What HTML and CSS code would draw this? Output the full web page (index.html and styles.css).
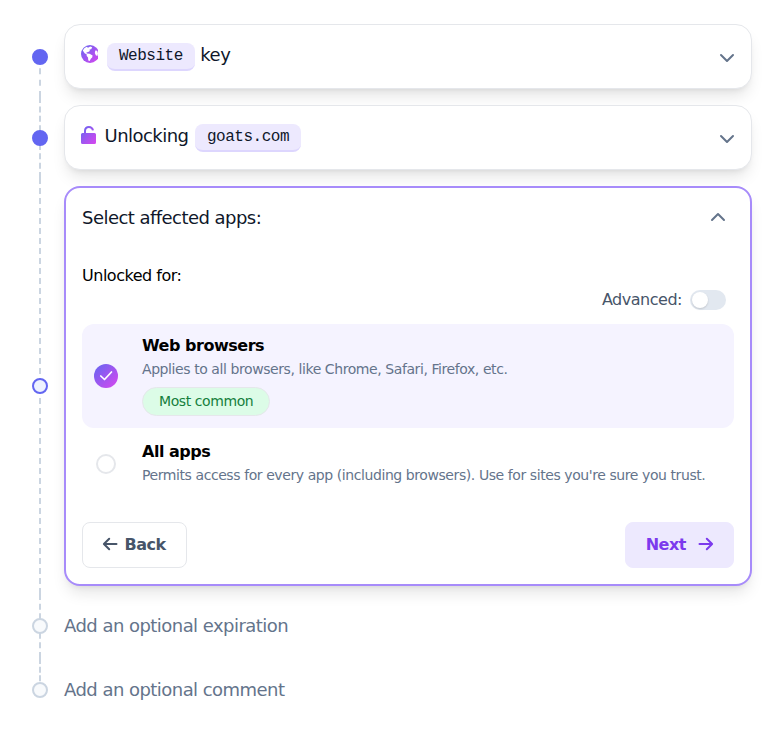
FILE: index.html
```html
<!DOCTYPE html>
<html lang="en">
<head>
<meta charset="utf-8">
<title>Add website key</title>
<link rel="stylesheet" href="styles.css">
</head>
<body>
<svg class="defs" width="0" height="0" aria-hidden="true">
  <linearGradient id="brand" x1="0" y1="0" x2="1" y2="1"><stop offset="0" stop-color="#6366f1"/><stop offset="1" stop-color="#d946ef"/></linearGradient>
</svg>
<main class="steps">
  <section class="step done">
    <div class="rail"><span class="dot"></span></div>
    <div class="card summary">
      <h2 class="title">
        <svg class="globe" width="17" height="18" viewBox="0 0 17 18"><circle cx="9" cy="9" r="9" fill="url(#brand)"/><path fill="#fff" d="M1.800 5.600 3.300 3.200 5.700 1.800 7 2.800 9.200 1.600 11.200 2.300 10.200 4.200 8.600 4.500 8.800 5.900 7.200 7.100 5.400 7.400 5.800 8.600 8.600 8.800 11.600 10.400 11.200 12.500 9.800 13.800 8.700 16 7.300 15.400 7 12.600 5.600 10.800 5.800 9.500 3.600 8.200ZM14.300 5.500 16.200 5.700 17 8.500 16.400 11 14.800 10.200 13.800 8Z"/></svg>
        <code class="chip">Website</code><span class="after">key</span>
      </h2>
      <svg class="chevron" width="24" height="24" viewBox="0 0 24 24"><path d="m6 9 6 6 6-6"/></svg>
    </div>
  </section>
  <section class="step done">
    <div class="rail"><span class="dot"></span></div>
    <div class="card summary">
      <h2 class="title">
        <svg class="lock" width="15" height="18" viewBox="0 0 15 18"><path fill="url(#brand)" d="M1.500 7H3V4.800C3 2 5 0 7.900 0c2.700 0 4.700 1.700 5.100 4.200l-2.100.4C10.700 3 9.500 2 7.900 2 6.200 2 5 3.200 5 4.900V7h8.500A1.500 1.500 0 0 1 15 8.500v8a1.500 1.500 0 0 1-1.500 1.500h-12A1.500 1.500 0 0 1 0 16.500v-8A1.500 1.500 0 0 1 1.500 7Z"/></svg>
        <span class="before">Unlocking</span><code class="chip">goats.com</code>
      </h2>
      <svg class="chevron" width="24" height="24" viewBox="0 0 24 24"><path d="m6 9 6 6 6-6"/></svg>
    </div>
  </section>
  <section class="step current">
    <div class="rail"><span class="dot"></span></div>
    <div class="card panel">
      <header class="panel-head">
        <h2 class="title">Select affected apps:</h2>
        <svg class="chevron" width="24" height="24" viewBox="0 0 24 24"><path d="m6 15 6-6 6 6"/></svg>
      </header>
      <p class="label">Unlocked for:</p>
      <div class="advanced"><span>Advanced:</span><span class="switch"><span class="knob"></span></span></div>
      <div class="option selected">
        <div class="mark"><svg width="24" height="24" viewBox="0 0 24 24"><circle cx="12" cy="12" r="12" fill="url(#brand)"/><path class="check" d="m6.800 12 3.700 3.500 7-7.500"/></svg></div>
        <div class="text">
          <h3>Web browsers</h3>
          <p>Applies to all browsers, like Chrome, Safari, Firefox, etc.</p>
          <span class="badge">Most common</span>
        </div>
      </div>
      <div class="option">
        <div class="mark"><span class="radio"></span></div>
        <div class="text">
          <h3>All apps</h3>
          <p>Permits access for every app (including browsers). Use for sites you're sure you trust.</p>
        </div>
      </div>
      <footer class="actions">
        <button class="btn back"><svg width="16" height="16" viewBox="0 0 16 16"><path d="M14.500 8H2M7.200 2.700 1.900 8l5.300 5.300"/></svg>Back</button>
        <button class="btn next">Next<svg width="16" height="16" viewBox="0 0 16 16"><path d="M1.500 8H14M8.800 2.700 14.100 8l-5.300 5.300"/></svg></button>
      </footer>
    </div>
  </section>
  <section class="step todo">
    <div class="rail"><span class="dot"></span></div>
    <h2 class="title">Add an optional expiration</h2>
  </section>
  <section class="step todo">
    <div class="rail"><span class="dot"></span></div>
    <h2 class="title">Add an optional comment</h2>
  </section>
</main>
</body>
</html>
```
FILE: styles.css
```css
* { box-sizing: border-box; margin: 0; padding: 0; }
body { background: #fff; color: #000; font: 16px/24px "DejaVu Sans", sans-serif; letter-spacing: -0.48px; }
svg { display: block; flex: none; }
.defs { position: absolute; }
.steps { padding: 16px; }
.step { display: grid; grid-template-columns: 48px 1fr; align-items: center; }
.todo { height: 64px; }
.rail { position: relative; align-self: stretch; display: flex; align-items: center; justify-content: center; }
.rail::before { content: ""; position: absolute; top: 0; bottom: 0; left: 23px; border-left: 2px dashed #cbd5e1; }
.step:first-child .rail::before { top: 50%; }
.step:last-child .rail::before { bottom: 50%; }
.dot { position: relative; width: 16px; height: 16px; border: 2px solid #cbd5e1; border-radius: 50%; background: #f8fafc; }
.done .dot { background: #6366f1; border-color: #6366f1; }
.current .dot { background: #eef2ff; border-color: #6366f1; }
.title { font-size: 18px; line-height: 28px; font-weight: 400; color: #0f172a; letter-spacing: -0.54px; }
.todo .title { color: #64748b; }
.card { margin: 8px 0; background: #fff; border: 1px solid #e5e7eb; border-radius: 16px; box-shadow: 0 10px 15px -3px rgba(0,0,0,.1), 0 4px 6px -4px rgba(0,0,0,.1); }
.summary { height: 65px; padding: 0 12px 0 16px; display: flex; align-items: center; justify-content: space-between; }
.summary .title { display: flex; align-items: center; padding-bottom: 4px; }
.summary .chevron { margin-top: 2px; }
.chip { display: block; height: 28px; margin-top: 4px; padding: 0 12px; border-bottom: 2px solid #ddd6fe; border-radius: 8px; background: #ede9fe; font: 16px/27px "Liberation Mono", monospace; letter-spacing: -0.48px; }
.globe { margin-right: 9px; margin-bottom: 2px; }
.lock { margin-right: 8.5px; margin-bottom: 2px; }
.after { margin-left: 5.5px; }
.before { margin-right: 6.5px; }
.chevron { fill: none; stroke: #64748b; stroke-width: 2; stroke-linecap: round; stroke-linejoin: round; }
.panel { height: 400px; padding: 16px; border: 2px solid #a78bfa; display: flex; flex-direction: column; }
.panel-head { display: flex; justify-content: space-between; padding-right: 4px; height: 60px; }
.panel-head .chevron { margin-top: 1px; }
.label { line-height: 24px; }
.advanced { display: flex; justify-content: flex-end; align-items: center; gap: 8px; height: 24px; padding-right: 8px; color: #475569; }
.switch { width: 36px; height: 20px; padding: 2px; border-radius: 10px; background: #e2e8f0; }
.knob { display: block; width: 16px; height: 16px; border-radius: 50%; background: #fff; box-shadow: 0 1px 2px rgba(0,0,0,.15); }
.option { display: grid; grid-template-columns: 24px 1fr; column-gap: 24px; align-items: center; padding: 10px 12px; border-radius: 12px; }
.option.selected { height: 104px; margin-top: 12px; background: #f5f3ff; }
.option:not(.selected) { height: 72px; }
.option h3 { font-size: 16px; line-height: 24px; font-weight: 700; }
.option p { margin: -1px 0 1px; font-size: 14px; line-height: 24px; color: #64748b; letter-spacing: -0.42px; white-space: nowrap; }
.selected .text { padding-bottom: 2px; }
.option.selected p { margin-bottom: 0; }
.mark { display: flex; justify-content: center; }
.radio { width: 20px; height: 20px; border: 2px solid #e5e7eb; border-radius: 50%; background: #fff; }
.check { fill: none; stroke: #fff; stroke-width: 1.7; stroke-linecap: round; stroke-linejoin: round; }
.badge { display: block; width: max-content; height: 29px; margin-top: 6px; padding: 0 16px; border: 1px solid #e5e7eb; border-radius: 15px; background: #dcfce7; color: #15803d; font-size: 14px; line-height: 27px; letter-spacing: -0.42px; }
.actions { display: flex; justify-content: space-between; margin-top: auto; }
.btn { display: flex; align-items: center; height: 46px; padding: 0 20px; border: 1px solid #e5e7eb; border-radius: 8px; background: #fff; color: #475569; font: 700 16px/24px "DejaVu Sans", sans-serif; letter-spacing: -0.48px; }
.btn svg { margin-bottom: 2px; fill: none; stroke: currentColor; stroke-width: 2; stroke-linecap: round; stroke-linejoin: round; }
.back { gap: 6.5px; padding: 0 20.5px 0 19px; }
.next { gap: 12px; padding-right: 19px; background: #ede9fe; border-color: #ede9fe; color: #7c3aed; }
```
